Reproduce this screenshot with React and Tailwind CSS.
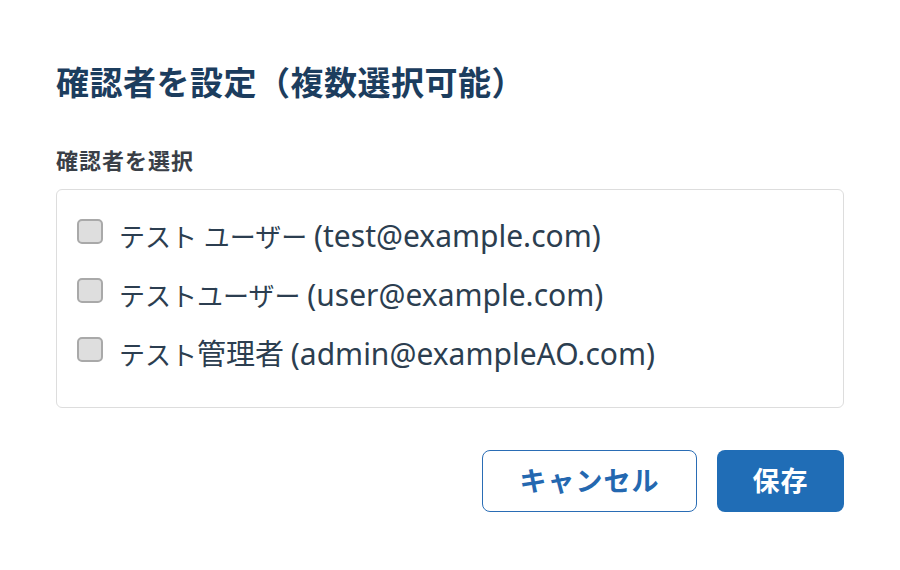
import React from "react";

const users = [
  [["テスト ユーザー", false]],
  [["テストユーザー", false]],
  [["テスト", false], ["管理者", true]],
];
const mails = ["(test@example.com)", "(user@example.com)", "(admin@exampleAO.com)"];

export default function App() {
  return (
    <div
      className="w-[900px] h-[570px] bg-white px-[56px] pt-[64px] flex flex-col"
      style={{ fontFamily: '"Noto Sans", "Noto Sans CJK JP", sans-serif' }}
    >
      <h1 className="text-[33px] leading-[38px] font-bold text-[#1c3d5e] tracking-[0.5px]">
        確認者を設定（複数選択可能）
      </h1>
      <div className="mt-[44px] text-[22px] leading-[28px] font-bold text-[#3a3f47] tracking-[1px]">
        確認者を選択
      </div>
      <div className="mt-[15px] h-[219px] border border-[#dddddd] rounded-[6px] pt-[17px] pl-[20px]">
        {users.map((parts, i) => (
          <label key={mails[i]} className="h-[59px] flex items-center gap-[16px]">
            <span className="w-[26px] h-[25px] mb-[10px] rounded-[5px] border-2 border-[#a9a9a9] bg-[#dedede] shrink-0" />
            <span className="text-[26px] leading-[36px] text-[#2c3e50] whitespace-nowrap">
              {parts.map(([t, k]) => (
                <span key={t} className={k ? "text-[29px]" : ""}>{t}</span>
              ))}{" "}
              <span className="text-[30px]">{mails[i]}</span>
            </span>
          </label>
        ))}
      </div>
      <div className="mt-[42px] flex justify-end gap-[20px]">
        <button className="w-[215px] h-[62px] rounded-[8px] border-[1.5px] border-[#2a6db5] bg-white text-[#2468b0] text-[27px] font-semibold tracking-[1px]">
          キャンセル
        </button>
        <button className="w-[127px] h-[62px] rounded-[8px] bg-[#206db6] text-white text-[27px] font-semibold tracking-[1px]">
          保存
        </button>
      </div>
    </div>
  );
}
